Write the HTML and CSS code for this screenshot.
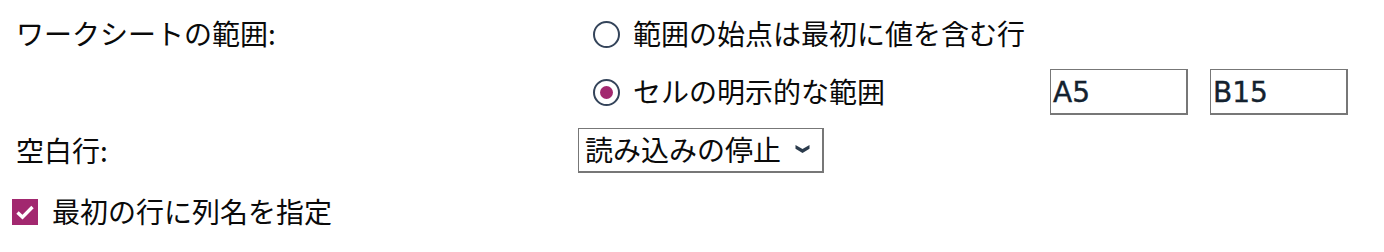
FILE: index.html
```html
<!DOCTYPE html>
<html lang="ja">
<head>
<meta charset="utf-8">
<title>ワークシートの範囲</title>
<link rel="stylesheet" href="styles.css">
</head>
<body>
<div class="form">
  <div class="label r1">ワークシートの範囲:</div>
  <div class="opt r1c2">
    <span class="radio"></span>
    <span class="opt-text">範囲の始点は最初に値を含む行</span>
  </div>
  <div class="opt r2c2">
    <span class="radio checked"></span>
    <span class="opt-text fixed">セルの明示的な範囲</span>
    <span class="inputs">
      <span class="tb">A5</span>
      <span class="tb">B15</span>
    </span>
  </div>
  <div class="label r3">空白行:</div>
  <div class="r3c2">
    <div class="select">
      <span class="select-text">読み込みの停止</span>
      <svg class="chev" width="15" height="10" viewBox="0 0 15 10"><path d="M0.5 1 L7.5 5 L14.5 1 L14.5 4.8 L7.5 9 L0.5 4.8 Z" fill="#2b3b4c"/></svg>
    </div>
  </div>
  <div class="check-row">
    <span class="checkbox"><svg width="26" height="26" viewBox="0 0 26 26"><path d="M5.5 13.5 L10.5 18.2 L20.5 8" fill="none" stroke="#fff" stroke-width="3.4"/></svg></span>
    <span class="check-text">最初の行に列名を指定</span>
  </div>
</div>
</body>
</html>
```
FILE: styles.css
```css
html, body {
  margin: 0;
  padding: 0;
  background: #fff;
}
body {
  font-family: "Noto Sans CJK JP", "Noto Sans", sans-serif;
  font-size: 28px;
  color: #0a0a0a;
}
.form {
  display: grid;
  grid-template-columns: 562px auto;
  grid-template-rows: 58px 58px 59px 64px;
  padding: 5px 0 0 16px;
}
.label {
  display: flex;
  align-items: center;
  line-height: 1.2;
}
.r1 { grid-row: 1; grid-column: 1; }
.r1c2 { grid-row: 1; grid-column: 2; }
.r2c2 { grid-row: 2; grid-column: 2; }
.r3 { grid-row: 3; grid-column: 1; }
.r3c2 {
  grid-row: 3;
  grid-column: 2;
  display: flex;
  align-items: center;
}
.opt {
  display: flex;
  align-items: center;
  padding-left: 15px;
  line-height: 1.2;
}
.radio {
  box-sizing: border-box;
  width: 27px;
  height: 27px;
  border: 2px solid #34445a;
  border-radius: 50%;
  display: flex;
  align-items: center;
  justify-content: center;
  flex: none;
  margin-right: 13px;
}
.radio.checked::after {
  content: "";
  width: 13px;
  height: 13px;
  border-radius: 50%;
  background: #a2286f;
}
.opt-text.fixed {
  width: 417px;
  flex: none;
}
.inputs {
  display: flex;
  gap: 22px;
}
.tb {
  box-sizing: border-box;
  width: 138px;
  height: 46px;
  border-style: solid;
  border-color: #777;
  border-width: 1px 2px 2px 1px;
  display: flex;
  align-items: center;
  padding-left: 2px;
  padding-top: 2px;
  font-family: "DejaVu Sans", sans-serif;
  font-size: 28px;
  color: #14222f;
  -webkit-text-stroke: 0.4px #14222f;
}
.select {
  box-sizing: border-box;
  width: 246px;
  height: 45px;
  border-style: solid;
  border-color: #777;
  border-width: 1px 2px 2px 1px;
  display: flex;
  align-items: center;
  padding-left: 6px;
  line-height: 1.2;
}
.chev {
  margin-left: 14px;
  margin-top: -3px;
}
.check-row {
  grid-row: 4;
  grid-column: 1 / span 2;
  display: flex;
  align-items: center;
  margin-left: -4px;
  line-height: 1.2;
}
.checkbox {
  width: 26px;
  height: 26px;
  background: #a2286f;
  display: flex;
  flex: none;
  margin-right: 14px;
}
```
